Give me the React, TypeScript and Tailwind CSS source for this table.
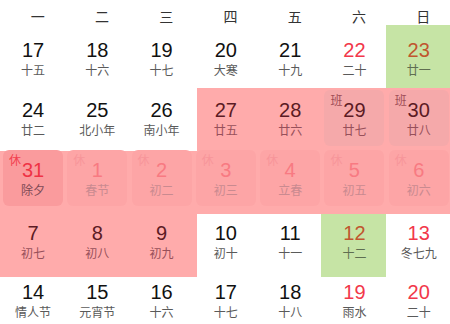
import React from "react";

type Day = {
  n: string;
  l: string;
  cell?: string;
  box?: string;
  tag?: string;
  tagC?: string;
  nC: string;
  lC: string;
};

const NUM = "text-[#111]";
const LUN = "text-[#5a5a5a]";
const RED = "text-[#f2384a]";
const PINK = "bg-[#ffabab]";
const GREEN = "bg-[#c6e4a5]";
const P_NUM = "text-[#5c1b24]";
const P_LUN = "text-[#97505a]";
const G_NUM = "text-[#c0562e]";
const G_LUN = "text-[#5f6e51]";
const F_NUM = "text-[#f87a82]";
const F_LUN = "text-[#c98a90]";
const F_TAG = "text-[#f7959a]";

const week = ["一", "二", "三", "四", "五", "六", "日"];

const rows: { off: string; days: Day[] }[] = [
  {
    off: "mt-[5px]",
    days: [
      { n: "17", l: "十五", nC: NUM, lC: LUN },
      { n: "18", l: "十六", nC: NUM, lC: LUN },
      { n: "19", l: "十七", nC: NUM, lC: LUN },
      { n: "20", l: "大寒", nC: NUM, lC: LUN },
      { n: "21", l: "十九", nC: NUM, lC: LUN },
      { n: "22", l: "二十", nC: RED, lC: LUN },
      { n: "23", l: "廿一", nC: G_NUM, lC: G_LUN, cell: GREEN },
    ],
  },
  {
    off: "mt-[2px]",
    days: [
      { n: "24", l: "廿二", nC: NUM, lC: LUN },
      { n: "25", l: "北小年", nC: NUM, lC: LUN },
      { n: "26", l: "南小年", nC: NUM, lC: LUN },
      { n: "27", l: "廿五", nC: P_NUM, lC: P_LUN, cell: "bg-[linear-gradient(to_right,#fff_4px,#ffabab_4px)]" },
      { n: "28", l: "廿六", nC: P_NUM, lC: P_LUN, cell: PINK },
      { n: "29", l: "廿七", nC: P_NUM, lC: P_LUN, cell: PINK, box: "bg-[#f5a9aa]", tag: "班", tagC: "text-[#9e4d57]" },
      { n: "30", l: "廿八", nC: P_NUM, lC: P_LUN, cell: PINK, box: "bg-[#f5a9aa]", tag: "班", tagC: "text-[#9e4d57]" },
    ],
  },
  {
    off: "-mt-px",
    days: [
      { n: "31", l: "除夕", nC: "text-[#ef3345]", lC: "text-[#7d4a55]", cell: PINK, box: "bg-[#fa9b9d]", tag: "休", tagC: "text-[#f2404f]" },
      { n: "1", l: "春节", nC: F_NUM, lC: F_LUN, cell: PINK, box: "bg-[#fda5a6]", tag: "休", tagC: F_TAG },
      { n: "2", l: "初二", nC: F_NUM, lC: F_LUN, cell: PINK, box: "bg-[#fda5a6]", tag: "休", tagC: F_TAG },
      { n: "3", l: "初三", nC: F_NUM, lC: F_LUN, cell: PINK, box: "bg-[#fda5a6]", tag: "休", tagC: F_TAG },
      { n: "4", l: "立春", nC: F_NUM, lC: F_LUN, cell: PINK, box: "bg-[#fda5a6]", tag: "休", tagC: F_TAG },
      { n: "5", l: "初五", nC: F_NUM, lC: F_LUN, cell: PINK, box: "bg-[#fda5a6]", tag: "休", tagC: F_TAG },
      { n: "6", l: "初六", nC: F_NUM, lC: F_LUN, cell: PINK, box: "bg-[#fda5a6]", tag: "休", tagC: F_TAG },
    ],
  },
  {
    off: "-mt-px",
    days: [
      { n: "7", l: "初七", nC: P_NUM, lC: P_LUN, cell: PINK },
      { n: "8", l: "初八", nC: P_NUM, lC: P_LUN, cell: PINK },
      { n: "9", l: "初九", nC: P_NUM, lC: P_LUN, cell: PINK },
      { n: "10", l: "初十", nC: NUM, lC: LUN, cell: "bg-[linear-gradient(to_right,#ffabab_4px,#fff_4px)]" },
      { n: "11", l: "十一", nC: NUM, lC: LUN },
      { n: "12", l: "十二", nC: G_NUM, lC: G_LUN, cell: GREEN },
      { n: "13", l: "冬七九", nC: RED, lC: LUN },
    ],
  },
  {
    off: "-mt-[5px]",
    days: [
      { n: "14", l: "情人节", nC: NUM, lC: LUN },
      { n: "15", l: "元宵节", nC: NUM, lC: LUN },
      { n: "16", l: "十六", nC: NUM, lC: LUN },
      { n: "17", l: "十七", nC: NUM, lC: LUN },
      { n: "18", l: "十八", nC: NUM, lC: LUN },
      { n: "19", l: "雨水", nC: RED, lC: LUN },
      { n: "20", l: "二十", nC: RED, lC: LUN },
    ],
  },
];

function Cell({ d, off }: { d: Day; off: string }) {
  return (
    <div className={`min-w-0 ${d.cell ?? ""}`}>
      <div className={`relative ml-[3px] w-[60px] h-[56px] rounded-md flex flex-col items-center pt-[8px] ${off} ${d.box ?? ""}`}>
        {d.tag && (
          <span className={`absolute left-[6px] top-[4px] text-[12px] leading-none font-['Noto_Sans_CJK_SC',sans-serif] ${d.tagC}`}>
            {d.tag}
          </span>
        )}
        <span className={`text-[20px] leading-[24px] font-['Liberation_Sans',sans-serif] ${d.nC}`}>{d.n}</span>
        <span className={`text-[12px] leading-[16px] font-['Noto_Sans_CJK_SC',sans-serif] ${d.lC}`}>{d.l}</span>
      </div>
    </div>
  );
}

export default function App() {
  return (
    <div className="w-[450px] h-[324px] overflow-hidden bg-white">
      <div className="grid grid-cols-7 h-[25px] pt-[8px]">
        {week.map((w) => (
          <div key={w} className="pl-[11px] text-center text-[14px] leading-[16px] text-[#333] font-['Noto_Sans_CJK_SC',sans-serif]">
            {w}
          </div>
        ))}
      </div>
      {rows.map((r, i) => (
        <div key={i} className="grid grid-cols-7 h-[63px]">
          {r.days.map((d) => (
            <Cell key={d.n + d.l} d={d} off={r.off} />
          ))}
        </div>
      ))}
    </div>
  );
}
